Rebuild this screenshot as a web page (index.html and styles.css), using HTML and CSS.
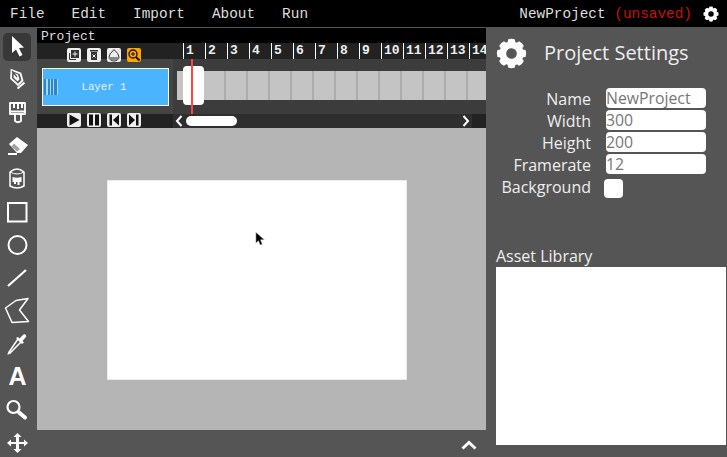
FILE: index.html
```html
<!DOCTYPE html>
<html lang="en">
<head>
    <meta charset="UTF-8">
    <title>NewProject</title>
    <link rel="stylesheet" href="styles.css">
</head>
<body>
    <svg class="defs" width="0" height="0">
        <symbol id="gear" viewBox="0 0 32 32">
            <circle cx="16" cy="16" r="9" fill="none" stroke="#fff" stroke-width="7"/>
            <g fill="#fff">
                <path id="tooth" d="M12.5 1.5q3.500-1.500 7 0l1 6h-9z"/>
                <use href="#tooth" transform="rotate(45 16 16)"/>
                <use href="#tooth" transform="rotate(90 16 16)"/>
                <use href="#tooth" transform="rotate(135 16 16)"/>
                <use href="#tooth" transform="rotate(180 16 16)"/>
                <use href="#tooth" transform="rotate(225 16 16)"/>
                <use href="#tooth" transform="rotate(270 16 16)"/>
                <use href="#tooth" transform="rotate(315 16 16)"/>
            </g>
        </symbol>
    </svg>

    <header class="menubar">
        <nav class="menu">
            <span>File</span>
            <span>Edit</span>
            <span>Import</span>
            <span>About</span>
            <span>Run</span>
        </nav>
        <div class="project-name">NewProject <span class="unsaved">(unsaved)</span></div>
        <svg class="menu-gear"><use href="#gear"/></svg>
    </header>

    <div class="workspace">
        <aside class="toolbar">
            <div class="tool active">
                <svg viewBox="3 2 28 28"><path fill="#fff" d="M12 5 24 16.500 19 17 22.500 24 19.500 25.500 16 18.500 12 22z"/></svg>
            </div>
            <div class="tool">
                <svg viewBox="3 2 28 28"><path fill="#555" stroke="#fff" stroke-width="1.800" d="M11.500 6 20.500 9.500l2 7-4.500 4.500-7-6.500z"/><path fill="#fff" d="M14 9l4 1.500 1.500 5-2 2-4-4z"/><path stroke="#555" stroke-width="1.200" d="M12 7l5 6"/><path stroke="#fff" stroke-width="2.200" d="M17.500 24.500l7-6"/></svg>
            </div>
            <div class="tool">
                <svg viewBox="3 2 28 28"><path fill="none" stroke="#fff" stroke-width="1.800" stroke-linejoin="round" d="M10 6h15v11h-15z"/><path stroke="#fff" stroke-width="2" d="M14 6v5M18 6v6M22 6v5M10 14.500h15"/><path fill="none" stroke="#fff" stroke-width="1.800" stroke-linejoin="round" d="M15 17h6v7q-3 2.500-6 0z"/></svg>
            </div>
            <div class="tool">
                <svg viewBox="3 2 28 28"><path fill="#fff" d="M9 14 17 7l11 8-7 8h-4z"/><path fill="#555" d="M14 13.500 20 19l-3 2.500-5.500-5z" opacity=".55"/><path stroke="#fff" stroke-width="2" d="M8 24h9"/></svg>
            </div>
            <div class="tool">
                <svg viewBox="3 2 28 28"><path fill="none" stroke="#fff" stroke-width="1.500" d="M10 9q7-6 14 0v14q-7 4-14 0z"/><path fill="none" stroke="#fff" d="M10 9q7 4 14 0"/><path fill="#fff" d="M12.500 14q4.500 1.500 9 0v5h-2v3h-2v-3h-1.500v2h-2v-2h-1.500z"/></svg>
            </div>
            <div class="tool">
                <svg viewBox="3 2 28 28"><rect x="8" y="7" width="18.500" height="18.500" fill="none" stroke="#fff" stroke-width="2"/></svg>
            </div>
            <div class="tool">
                <svg viewBox="3 2 28 28"><circle cx="17.500" cy="16" r="9" fill="none" stroke="#fff" stroke-width="2"/></svg>
            </div>
            <div class="tool">
                <svg viewBox="3 2 28 28"><path stroke="#fff" stroke-width="2.200" d="M8 24 26 8"/></svg>
            </div>
            <div class="tool">
                <svg viewBox="3 2 28 28"><path fill="none" stroke="#fff" stroke-width="1.500" stroke-linejoin="round" d="M5.500 13 16 5.500 28 3.500 19.500 15 28.500 26.500 12 27.500z"/></svg>
            </div>
            <div class="tool">
                <svg viewBox="3 2 28 28"><path fill="none" stroke="#fff" stroke-width="1.500" d="M9 24l-.5 1.500L10 25l11-11-3-3z"/><path fill="#fff" d="M18 9l1.500 1.500 4-4q2-1 2.500 1t-.500 2l-3 3.500 1.500 1.500-2 1.500-6-6z"/></svg>
            </div>
            <div class="tool">
                <svg viewBox="3 2 28 28"><text class="tool-letter" x="17.500" y="24">A</text></svg>
            </div>
            <div class="tool">
                <svg viewBox="3 2 28 28"><circle cx="13.500" cy="13" r="6" fill="none" stroke="#fff" stroke-width="2.200"/><path stroke="#fff" stroke-width="4" stroke-linecap="round" d="M19 18.500l6 5"/></svg>
            </div>
            <div class="tool">
                <svg viewBox="3 2 28 28"><path fill="#fff" d="M17.500 6l4 4h-2.500v5h5v-2.500l4 3.500-4 3.500v-2.500h-5v5h2.500l-4 4-4-4h2.500v-5h-5v2.500l-4-3.500 4-3.500v2.500h5v-5h-2.500z"/></svg>
            </div>
        </aside>

        <main class="center">
            <section class="timeline">
                <div class="timeline-title">Project</div>
                <div class="tl-row ruler-row">
                    <div class="layer-tools">
                        <svg class="mini" viewBox="0 0 14 14"><rect width="14" height="14" rx="2" fill="#eee"/><path fill="none" stroke="#333" d="M2.500 5v6.500h6.500"/><rect x="4" y="2" width="8" height="8" fill="#333"/><path stroke="#eee" d="M8 3.500v5M5.500 6h5"/></svg>
                        <svg class="mini" viewBox="0 0 14 14"><rect width="14" height="14" rx="2" fill="#eee"/><path fill="#333" d="M3 2h8v1.500h-8zM4 4h6v8h-6z"/><path stroke="#eee" d="M5.500 6.500l3 3M8.500 6.500l-3 3"/></svg>
                        <svg class="mini" viewBox="0 0 14 14"><rect width="14" height="14" rx="2" fill="#eee"/><path fill="none" stroke="#333" d="M7 1.500q5 4.500 5 7.500a5 4 0 0 1-10 0q0-3 5-7.500z"/><path fill="#888" d="M2.500 9h9a4.500 3.500 0 0 1-9 0z"/></svg>
                        <svg class="mini" viewBox="0 0 14 14"><rect width="14" height="14" rx="2" fill="#ffa500"/><circle cx="6" cy="6" r="4" fill="none" stroke="#111" stroke-width="1.300"/><path stroke="#111" d="M6 4v4M4 6h4"/><path stroke="#111" stroke-width="2" d="M9 9l3.500 3.500"/></svg>
                    </div>
                    <div class="ruler">
                        <span>1</span><span>2</span><span>3</span><span>4</span><span>5</span><span>6</span><span>7</span><span>8</span><span>9</span><span>10</span><span>11</span><span>12</span><span>13</span><span>14</span>
                    </div>
                </div>
                <div class="tl-row layer-row">
                    <div class="layer-side">
                        <div class="layer">
                            <div class="layer-grip"></div>
                            <span class="layer-name">Layer 1</span>
                        </div>
                    </div>
                    <div class="frames">
                        <i class="frame-stub"></i>
                        <i></i><i></i><i></i><i></i><i></i><i></i><i></i><i></i><i></i><i></i><i></i><i></i><i></i><i></i>
                    </div>
                </div>
                <div class="tl-row controls-row">
                    <div class="playback">
                        <svg class="mini" viewBox="0 0 14 14"><rect width="14" height="14" rx="2" fill="#eee"/><path fill="#111" d="M2.500 1.500 12.500 7l-10 5.500z"/></svg>
                        <svg class="mini" viewBox="0 0 14 14"><rect width="14" height="14" rx="2" fill="#eee"/><path fill="#111" d="M2 1.500h4v11h-4zM8 1.500h4v11h-4z"/></svg>
                        <svg class="mini" viewBox="0 0 14 14"><rect width="14" height="14" rx="2" fill="#eee"/><path fill="#111" d="M2.500 1.500h2.500v11h-2.500zM12 1.500v11l-6-5.500z"/></svg>
                        <svg class="mini" viewBox="0 0 14 14"><rect width="14" height="14" rx="2" fill="#eee"/><path fill="#111" d="M9 1.500h2.500v11h-2.500zM2 1.500v11l6-5.500z"/></svg>
                    </div>
                    <div class="scroller">
                        <svg class="chev" viewBox="0 0 8 12"><path fill="none" stroke="#fff" stroke-width="2" d="M6.500 1 2 6l4.500 5"/></svg>
                        <div class="scroller-track"><div class="scroller-thumb"></div></div>
                        <svg class="chev" viewBox="0 0 8 12"><path fill="none" stroke="#fff" stroke-width="2" d="M1.500 1 6 6l-4.500 5"/></svg>
                        <div class="scroller-end"></div>
                    </div>
                </div>
                <div class="keyframe"></div>
                <div class="playhead"></div>
            </section>

            <section class="stage">
                <div class="canvas"></div>
                <svg class="cursor" viewBox="0 0 14 18"><path fill="#000" stroke="#ddd" stroke-width=".6" d="M1 1v13l3-3 2 5 2.500-1-2-5H11z"/></svg>
            </section>

            <footer class="stage-footer">
                <svg class="collapse" viewBox="0 0 16 10"><path fill="none" stroke="#fff" stroke-width="3" d="M1.500 8.500 8 2.500l6.500 6"/></svg>
            </footer>
        </main>

        <aside class="settings">
            <div class="settings-head">
                <svg class="settings-gear"><use href="#gear"/></svg>
                <h2>Project Settings</h2>
            </div>
            <div class="form">
                <label for="name">Name</label>
                <input type="text" id="name" value="NewProject">
                <label for="width">Width</label>
                <input type="text" id="width" value="300">
                <label for="height">Height</label>
                <input type="text" id="height" value="200">
                <label for="framerate">Framerate</label>
                <input type="text" id="framerate" value="12">
                <label>Background</label>
                <div class="swatch"></div>
            </div>
            <h3>Asset Library</h3>
            <div class="assets"></div>
        </aside>
    </div>
</body>
</html>
```

FILE: styles.css
```css
* {
    box-sizing: border-box;
}
html, body {
    margin: 0;
    height: 100%;
    overflow: hidden;
}
body {
    width: 727px;
    height: 457px;
    background: #555;
    font-family: "Open Sans", sans-serif;
    color: #fff;
    display: flex;
    flex-direction: column;
}
.defs {
    position: absolute;
}

/* menu */
.menubar {
    height: 28px;
    flex: none;
    background: #000;
    border-bottom: 1px solid #555;
    display: flex;
    align-items: center;
    font-family: "Liberation Mono", monospace;
    font-size: 14.4px;
    padding: 1px 8px 0 10px;
}
.menu {
    display: flex;
    gap: 27px;
    color: #ddd;
    flex: 1;
}
.project-name {
    color: #ddd;
    margin-right: 11px;
}
.unsaved {
    color: #c80f0f;
}
.menu-gear {
    width: 16px;
    height: 16px;
}

.workspace {
    flex: 1;
    display: flex;
    min-height: 0;
}

/* tools */
.toolbar {
    width: 37px;
    flex: none;
    background: #555;
    padding-top: 5px;
}
.tool {
    width: 28px;
    height: 28px;
    margin: 0 0 5px 3px;
    border-radius: 5px;
}
.tool svg {
    display: block;
    width: 28px;
    height: 28px;
    overflow: visible;
}
.tool.active {
    background: #383838;
}
.tool-letter {
    font-family: "Liberation Sans", sans-serif;
    font-weight: bold;
    font-size: 25px;
    fill: #fff;
    text-anchor: middle;
}

.center {
    width: 449px;
    flex: none;
    display: flex;
    flex-direction: column;
}

/* timeline */
.timeline {
    position: relative;
    flex: none;
    overflow: hidden;
    font-family: "Liberation Mono", monospace;
}
.timeline-title {
    height: 15px;
    background: #000;
    color: #ddd;
    font-size: 13px;
    line-height: 17px;
    padding-left: 4px;
}
.tl-row {
    display: flex;
}
.ruler-row {
    height: 16px;
    background: #222;
}
.layer-tools {
    position: relative;
    z-index: 1;
    width: 136px;
    flex: none;
    display: flex;
    gap: 6px;
    padding: 5px 0 0 30px;
}
.mini {
    width: 14px;
    height: 14px;
    flex: none;
}
.ruler {
    display: flex;
    padding-left: 10px;
    white-space: nowrap;
}
.ruler span {
    width: 22px;
    flex: none;
    border-left: 1px solid #fff;
    padding-left: 2px;
    font-size: 13px;
    font-weight: bold;
    line-height: 16px;
    color: #eee;
}
.layer-row {
    height: 55px;
    background: #3c3c3c;
}
.layer-side {
    width: 136px;
    flex: none;
    background: #444;
    padding: 9px 0 0 5px;
}
.layer {
    width: 127px;
    height: 38px;
    background: #4ab4ff;
    border: 1px solid #fff;
    display: flex;
    align-items: center;
    position: relative;
}
.layer-grip {
    width: 14px;
    height: 16px;
    margin-left: 1px;
    background: repeating-linear-gradient(90deg, #2a86c6 0 2px, #a6d8fa 2px 3.5px);
}
.layer-name {
    flex: 1;
    text-align: center;
    font-size: 10.7px;
    padding-right: 18px;
    color: #e8f5ff;
}
.frames {
    display: flex;
    height: 29px;
    margin: 12px 0 0 4px;
    background: #c4c4c4;
}
.frames i {
    width: 22px;
    flex: none;
    border-right: 2px solid #acacac;
}
.frames .frame-stub {
    width: 5px;
    border-right: 0;
}
.controls-row {
    height: 14px;
    background: #222;
}
.playback {
    position: relative;
    z-index: 1;
    width: 136px;
    flex: none;
    display: flex;
    gap: 6px;
    margin-top: -1px;
    padding-left: 30px;
}
.scroller {
    flex: 1;
    display: flex;
    align-items: center;
    background: #2e2e2e;
    min-width: 0;
}
.chev {
    width: 8px;
    height: 12px;
    flex: none;
}
.scroller > .chev:first-child {
    margin-left: 2px;
}
.scroller-track {
    flex: 1;
    padding-left: 3px;
}
.scroller-thumb {
    width: 51px;
    height: 10px;
    background: #fff;
    border-radius: 5px;
}
.scroller-end {
    width: 14px;
    height: 14px;
    margin-left: 2px;
    flex: none;
    background: #222;
}
.keyframe {
    position: absolute;
    left: 146px;
    top: 38px;
    width: 21px;
    height: 39px;
    background: #fff;
    border-radius: 4px;
}
.playhead {
    position: absolute;
    left: 154px;
    top: 31px;
    width: 2px;
    height: 55px;
    background: #f44;
}

/* stage */
.stage {
    position: relative;
    flex: 1;
    background: #b5b5b5;
    display: flex;
    align-items: center;
    justify-content: center;
    padding: 2px 9px 0 0;
}
.canvas {
    width: 300px;
    height: 200px;
    background: #fff;
    border: 1px solid #ececec;
}
.cursor {
    position: absolute;
    left: 218px;
    top: 103px;
    width: 12px;
    height: 16px;
}
.stage-footer {
    height: 27px;
    flex: none;
    display: flex;
    justify-content: flex-end;
    align-items: center;
    padding: 2px 9px 0 0;
}
.collapse {
    width: 16px;
    height: 10px;
}

/* settings */
.settings {
    flex: 1;
    background: #555;
    padding-left: 10px;
}
.settings-head {
    display: flex;
    align-items: center;
    height: 30px;
    margin-top: 10px;
}
.settings-gear {
    width: 31px;
    height: 31px;
    flex: none;
}
.settings-head h2 {
    margin: 0 0 2px 17px;
    font-size: 20px;
    font-weight: 400;
    color: #eee;
}
.form {
    display: grid;
    grid-template-columns: 95px 100px;
    grid-auto-rows: 20px;
    column-gap: 15px;
    row-gap: 2px;
    margin-top: 20px;
}
.form label {
    text-align: right;
    font-size: 16px;
    line-height: 22px;
    height: 20px;
    color: #eee;
}
.form input {
    width: 100px;
    height: 20px;
    border: 0;
    border-radius: 4px;
    padding: 0;
    font-family: "Open Sans", sans-serif;
    font-size: 15.8px;
    color: #777;
    background: #fff;
}
.swatch {
    width: 19px;
    height: 19px;
    margin: 3px 0 0 -2px;
    background: #fff;
    border-radius: 4px;
}
.settings h3 {
    margin: 49px 0 0;
    font-size: 16px;
    font-weight: 400;
    line-height: 22px;
    color: #eee;
}
.assets {
    width: 230px;
    height: 178px;
    background: #fff;
}
```
